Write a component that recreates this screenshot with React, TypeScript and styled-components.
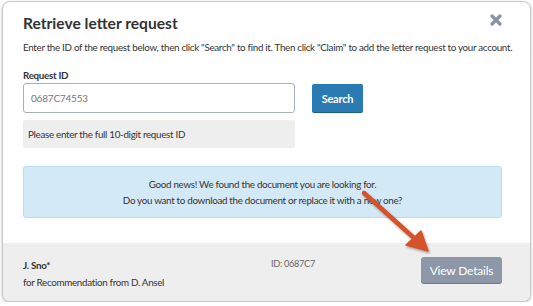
import styled, { createGlobalStyle } from "styled-components";

const GlobalStyle = createGlobalStyle`
    html, body {
        margin: 0;
        padding: 0;
        background: #ffffff;
    }
    body {
        font-family: Lato, "Open Sans", sans-serif;
        color: #333333;
    }
`;

export default function App() {
    return (
        <Page>
            <GlobalStyle />
            <Modal>
                <Body>
                    <Header>
                        <Title>Retrieve letter request</Title>
                        <Close aria-label="close">
                            <svg width="12" height="12" viewBox="0 0 12 12">
                                <path d="M2 2 L10 10 M10 2 L2 10" stroke="#8a93a3" strokeWidth="3.2" strokeLinecap="round" />
                            </svg>
                        </Close>
                    </Header>
                    <Intro>
                        Enter the ID of the request below, then click "Search" to find it. Then click "Claim" to add the letter request to your account.
                    </Intro>
                    <Label>Request ID</Label>
                    <SearchRow>
                        <Field>
                            <Input placeholder="0687C74553" />
                            <Hint>Please enter the full 10-digit request ID</Hint>
                        </Field>
                        <SearchButton>Search</SearchButton>
                    </SearchRow>
                    <Alert>
                        <p>Good news! We found the document you are looking for.</p>
                        <p>Do you want to download the document or replace it with a new one?</p>
                    </Alert>
                </Body>
                <Footer>
                    <Who>
                        <b>J. Sno*</b>
                        <span>for Recommendation from D. Ansel</span>
                    </Who>
                    <RequestId>ID: 0687C7</RequestId>
                    <DetailsButton>View Details</DetailsButton>
                </Footer>
                <Arrow width="533" height="306" viewBox="0 0 533 306">
                    <defs>
                        <filter id="sh" x="-20%" y="-20%" width="140%" height="140%">
                            <feDropShadow dx="1" dy="1.5" stdDeviation="1.2" floodColor="#000" floodOpacity="0.35" />
                        </filter>
                    </defs>
                    <g filter="url(#sh)">
                        <path d="M364 193 L414 238" stroke="#d4522a" strokeWidth="4.5" strokeLinecap="round" />
                        <path d="M428 251 L406 245 L421 231 Z" fill="#d4522a" stroke="#d4522a" strokeWidth="1.5" strokeLinejoin="round" />
                    </g>
                </Arrow>
            </Modal>
        </Page>
    );
}

const Page = styled.div`
    padding: 1px 2px 0 2px;
`;

const Modal = styled.div`
    position: relative;
    width: 529px;
    height: 301px;
    box-sizing: border-box;
    border: 1px solid #c9c9c9;
    border-radius: 8px;
    background: #ffffff;
    box-shadow: 0 1px 3px rgba(0, 0, 0, 0.25);
    overflow: hidden;
    display: flex;
    flex-direction: column;
    font-size: 9.8px;
    letter-spacing: -0.3px;
`;

const Body = styled.div`
    flex: 1;
    padding: 11px 28px 0 20px;
`;

const Header = styled.div`
    display: flex;
    justify-content: space-between;
    align-items: flex-start;
`;

const Title = styled.h1`
    margin: 0;
    font-family: Lato, sans-serif;
    font-size: 15.6px;
    font-weight: 700;
    letter-spacing: 0;
    color: #333333;
    line-height: 20px;
`;

const Close = styled.button`
    border: 0;
    background: none;
    padding: 0;
    margin: 1px 0 0 0;
    cursor: pointer;
    line-height: 0;
`;

const Intro = styled.p`
    margin: 7px 0 0;
    line-height: 14px;
    color: #333333;
    white-space: nowrap;
`;

const Label = styled.div`
    margin-top: 14px;
    font-weight: 700;
    line-height: 14px;
`;

const SearchRow = styled.div`
    display: flex;
    gap: 17px;
    margin-top: 1px;
    align-items: flex-start;
`;

const Field = styled.div`
    display: flex;
    flex-direction: column;
    gap: 7px;
    width: 272px;
`;

const Input = styled.input`
    box-sizing: border-box;
    height: 30px;
    width: 100%;
    border: 1px solid #a9b0bd;
    border-radius: 3px;
    padding: 0 7px;
    font-family: Lato, sans-serif;
    font-size: 10px;
    letter-spacing: -0.2px;
    &::placeholder {
        color: #777777;
    }
`;

const Hint = styled.div`
    background: #eeeeee;
    border-radius: 3px;
    height: 28px;
    padding: 0 5px;
    display: flex;
    align-items: center;
    color: #333333;
`;

const SearchButton = styled.button`
    margin-top: 1px;
    height: 28px;
    width: 51px;
    border: 0;
    border-radius: 2px;
    background: #2a7bb1;
    box-shadow: 0 1px 0 #1c5e8a;
    color: #ffffff;
    font-family: Lato, sans-serif;
    font-weight: 700;
    font-size: 11px;
    letter-spacing: -0.2px;
    cursor: pointer;
`;

const Alert = styled.div`
    margin-top: 18px;
    width: 479px;
    box-sizing: border-box;
    height: 52px;
    background: #d3e9f6;
    border: 1px solid #b9dcef;
    border-radius: 3px;
    display: flex;
    flex-direction: column;
    justify-content: center;
    gap: 2px;
    text-align: center;
    color: #333333;
    p {
        margin: 0;
        line-height: 14px;
    }
`;

const Footer = styled.div`
    height: 58px;
    background: #eeeeee;
    display: flex;
    align-items: flex-start;
    padding: 0 28px 0 20px;
`;

const Who = styled.div`
    display: flex;
    flex-direction: column;
    gap: 3px;
    margin-top: 15px;
    width: 248px;
    line-height: 14px;
    b {
        font-weight: 700;
    }
`;

const RequestId = styled.div`
    margin-top: 15px;
    font-size: 9.2px;
    color: #666666;
    flex: 1;
`;

const DetailsButton = styled.button`
    margin-top: 14px;
    width: 81px;
    height: 26px;
    border: 0;
    border-radius: 3px;
    background: #8d97a7;
    box-shadow: 0 1px 0 #6f7888;
    color: #ffffff;
    font-family: Lato, sans-serif;
    font-size: 12px;
    letter-spacing: -0.2px;
    cursor: pointer;
`;

const Arrow = styled.svg`
    position: absolute;
    left: -3px;
    top: -2px;
    pointer-events: none;
`;
